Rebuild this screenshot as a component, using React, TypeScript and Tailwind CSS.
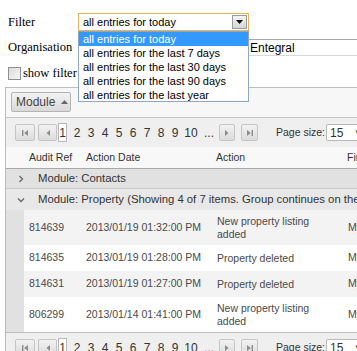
import React from "react";

const OPTIONS = [
  "all entries for today",
  "all entries for the last 7 days",
  "all entries for the last 30 days",
  "all entries for the last 90 days",
  "all entries for the last year",
];

const PAGES = ["2", "3", "4", "5", "6", "7", "8", "9"];

const ROWS = [
  { ref: "814639", date: "2013/01/19 01:32:00 PM", action: "New property listing added", tall: true, alt: true },
  { ref: "814635", date: "2013/01/19 01:28:00 PM", action: "Property deleted", tall: false, alt: false },
  { ref: "814631", date: "2013/01/19 01:27:00 PM", action: "Property deleted", tall: false, alt: true },
  { ref: "806299", date: "2013/01/14 01:41:00 PM", action: "New property listing added", tall: true, alt: false },
];

function NavIcon({ kind }: { kind: "first" | "prev" | "next" | "last" }) {
  return (
    <svg width="8" height="8" viewBox="0 0 8 8" className="block">
      {kind === "first" && (
        <>
          <rect x="1" y="1" width="1.4" height="6" fill="#8c8c8c" />
          <polygon points="7,1 3.2,4 7,7" fill="#8c8c8c" />
        </>
      )}
      {kind === "prev" && <polygon points="6,1 2.5,4 6,7" fill="#8c8c8c" />}
      {kind === "next" && <polygon points="2,1 5.5,4 2,7" fill="#8c8c8c" />}
      {kind === "last" && (
        <>
          <polygon points="1,1 4.8,4 1,7" fill="#8c8c8c" />
          <rect x="5.6" y="1" width="1.4" height="6" fill="#8c8c8c" />
        </>
      )}
    </svg>
  );
}

function NavBtn({ kind, w }: { kind: "first" | "prev" | "next" | "last"; w: string }) {
  return (
    <div
      className={`${w} shrink-0 h-[17px] flex items-center justify-center rounded-[2px] border border-[#c4c4c4] bg-gradient-to-b from-[#f2f2f2] to-[#dcdcdc]`}
    >
      <NavIcon kind={kind} />
    </div>
  );
}

function Pager() {
  return (
    <div className="h-[29px] bg-[#efefef] flex items-center pl-[9px] text-[#333] text-[12px] whitespace-nowrap">
      <NavBtn kind="first" w="w-[20px]" />
      <div className="ml-[3px] shrink-0">
        <NavBtn kind="prev" w="w-[19px]" />
      </div>
      <div className="ml-[1px] shrink-0 w-[9px] h-[19px] flex items-center justify-center bg-white border border-[#b8b8b8]">
        1
      </div>
      <div className="ml-[3px] flex shrink-0">
        {PAGES.map((p) => (
          <span key={p} className="w-[14px] text-center">
            {p}
          </span>
        ))}
        <span className="w-[18px] text-center">10</span>
        <span className="w-[18px] text-center">...</span>
      </div>
      <div className="ml-[1px] shrink-0">
        <NavBtn kind="next" w="w-[16px]" />
      </div>
      <div className="ml-[6px] shrink-0">
        <NavBtn kind="last" w="w-[17px]" />
      </div>
      <span className="ml-[18px] shrink-0 text-[10.5px]">Page size:</span>
      <div className="ml-[1px] h-[17px] w-[40px] shrink-0 flex items-center justify-between pl-[3px] pr-[3px] bg-white border border-[#b8b8b8] rounded-[2px]">
        <span>15</span>
        <span className="text-[8px] text-[#222]">▼</span>
      </div>
    </div>
  );
}

function Chevron({ open }: { open: boolean }) {
  return (
    <svg width="8" height="8" viewBox="0 0 8 8" className="block">
      {open ? (
        <polyline points="1,2.5 4,5.5 7,2.5" fill="none" stroke="#666" strokeWidth="1.3" />
      ) : (
        <polyline points="2.5,1 5.5,4 2.5,7" fill="none" stroke="#666" strokeWidth="1.3" />
      )}
    </svg>
  );
}

export default function App() {
  return (
    <div className="relative w-[357px] h-[351px] overflow-hidden bg-white">
      {/* filter form */}
      <div className="font-['Liberation_Serif',serif] text-[12.5px] text-black">
        <div className="flex items-center mt-[13px] h-[18px]">
          <span className="w-[78px] shrink-0 pl-[8px]">Filter</span>
          <div className="w-[171px] shrink-0 h-[18px] flex items-center justify-between bg-white border border-[#e3b458] pl-[4px] pr-[1px] font-['Liberation_Sans',sans-serif] text-[11px]">
            <span>all entries for today</span>
            <div className="w-[15px] h-[14px] flex items-center justify-center border border-[#9a9a9a] bg-gradient-to-b from-[#f4f4f4] to-[#d6d6d6]">
              <svg width="7" height="4" viewBox="0 0 7 4" className="block">
                <polygon points="0,0 7,0 3.5,4" fill="#111" />
              </svg>
            </div>
          </div>
        </div>
        <div className="flex items-center mt-[8px] h-[17px]">
          <span className="w-[78px] shrink-0 pl-[8px]">Organisation</span>
          <div className="flex-1 h-[17px] flex items-center border-t border-t-[#a8a8a8] border-b border-b-[#d8d8d8] pl-[172px] font-['Liberation_Sans',sans-serif] text-[12px]">
            Entegral
          </div>
        </div>
        <div className="flex items-center mt-[11px] h-[13px] pl-[8px]">
          <span className="w-[13px] h-[13px] shrink-0 border border-[#8f8f8f] bg-gradient-to-br from-[#dcdcdc] to-[#f6f6f6]" />
          <span className="ml-[2px]">show filter</span>
        </div>
      </div>

      {/* grid */}
      <div className="mt-[7px] ml-[5px] border-l border-t border-[#bdbdbd] font-['Liberation_Sans',sans-serif] text-[10.5px]">
        <div className="h-[30px] bg-[#f7f7f7] border-b border-[#c6c6c6] pl-[5px] pt-[4px]">
          <div className="w-[60px] h-[20px] flex items-center pl-[4px] border border-[#b4b4b4] rounded-[2px] bg-gradient-to-b from-[#f3f3f3] to-[#d9d9d9] text-[#444] text-[12px]">
            <span>Module</span>
            <svg width="7" height="4" viewBox="0 0 7 4" className="block ml-[6px]">
              <polygon points="0,4 7,4 3.5,0" fill="#666" />
            </svg>
          </div>
        </div>
        <Pager />
        <div className="h-[22px] bg-[#f8f8f8] border-b border-[#a9a9a9] flex items-center text-[#333] whitespace-nowrap">
          <span className="w-[80px] shrink-0 pl-[23px]">Audit Ref</span>
          <span className="w-[130px] shrink-0">Action Date</span>
          <span className="w-[131px] shrink-0">Action</span>
          <span className="shrink-0">First Name</span>
        </div>
        <div className="h-[20px] bg-[#e1e1e1] border-b border-[#cacaca] flex items-center text-[#333] text-[11.3px] whitespace-nowrap">
          <span className="w-[32px] shrink-0 pl-[11px]">
            <Chevron open={false} />
          </span>
          <span className="shrink-0">Module: Contacts</span>
        </div>
        <div className="h-[21px] bg-[#e8e8e8] flex items-center text-[#333] text-[11.3px] whitespace-nowrap">
          <span className="w-[32px] shrink-0 pl-[11px]">
            <Chevron open={true} />
          </span>
          <span className="shrink-0">Module: Property (Showing 4 of 7 items. Group continues on the next page)</span>
        </div>
        <div className="flex border-b border-[#bdbdbd]">
          <div className="w-[18px] shrink-0 bg-[#e1e1e1]" />
          <div className="flex-1">
            {ROWS.map((r) => (
              <div
                key={r.ref}
                className={`${r.tall ? "h-[35px]" : "h-[26px]"} ${r.alt ? "bg-[#f3f3f3]" : "bg-white"} flex items-center text-[#4a4a4a] whitespace-nowrap`}
              >
                <span className="w-[58px] shrink-0 pl-[5px]">{r.ref}</span>
                <span className="w-[130px] shrink-0 pl-[4px]">{r.date}</span>
                <span className="w-[131px] shrink-0 pl-[5px] whitespace-normal leading-[13px] pr-[20px]">{r.action}</span>
                <span className="shrink-0 pl-[5px]">My Agency</span>
              </div>
            ))}
          </div>
        </div>
        <Pager />
      </div>

      {/* open select list */}
      <div className="absolute left-[78px] top-[31px] w-[171px] h-[71px] bg-white border border-[#8fa6c4] font-['Liberation_Sans',sans-serif] text-[11px] text-black">
        {OPTIONS.map((o, i) => (
          <div
            key={o}
            className={`h-[14px] leading-[14px] pl-[4px] ${i === 0 ? "bg-[#3399ff] text-white" : ""}`}
          >
            {o}
          </div>
        ))}
      </div>
    </div>
  );
}
